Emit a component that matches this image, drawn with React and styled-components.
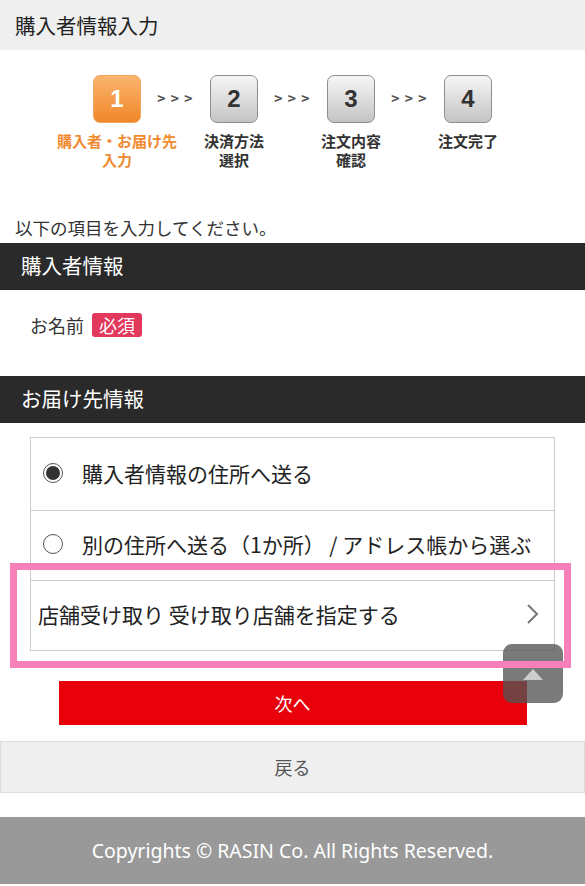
import styled, { createGlobalStyle } from "styled-components";

const Global = createGlobalStyle`
  body {
    margin: 0;
    background: #fff;
    font-family: "Noto Sans CJK JP", "Noto Sans", sans-serif;
    color: #333;
  }
`;

const Page = styled.div`
  position: relative;
  width: 585px;
  min-height: 886px;
  overflow: hidden;
`;

const TitleBar = styled.div`
  height: 50px;
  background: #efefef;
  display: flex;
  align-items: center;
  padding-left: 15px;
  font-size: 20.5px;
  color: #222;
`;

const Steps = styled.div`
  display: flex;
  justify-content: center;
  padding-top: 25px;
  height: 166px;
  box-sizing: border-box;
`;

const Step = styled.div`
  position: relative;
  width: 117px;
  display: flex;
  flex-direction: column;
  align-items: center;
  &:not(:last-child)::after {
    content: "> > >";
    position: absolute;
    top: 13px;
    right: -18px;
    font-size: 14px;
    font-weight: 700;
    color: #555;
    letter-spacing: 1px;
  }
`;

const StepBox = styled.div`
  width: 46px;
  height: 46px;
  border-radius: 7px;
  display: flex;
  align-items: center;
  justify-content: center;
  font-family: "Liberation Sans", Arial, sans-serif;
  font-weight: 700;
  font-size: 24px;
  border: 1px solid ${(p) => (p.$active ? "#f3a35c" : "#8e8e8e")};
  color: ${(p) => (p.$active ? "#fff" : "#333")};
  background: ${(p) =>
    p.$active
      ? "linear-gradient(#fbb46e, #f0872a)"
      : "linear-gradient(#f6f6f6, #c4c4c4)"};
`;

const StepLabel = styled.div`
  margin-top: 8px;
  font-size: 15px;
  font-weight: 700;
  line-height: 19px;
  text-align: center;
  white-space: nowrap;
  color: ${(p) => (p.$active ? "#f08a30" : "#333")};
`;

const Lead = styled.p`
  margin: 0 0 3px 15px;
  font-size: 17.5px;
  line-height: 24px;
  color: #333;
`;

const SectionHead = styled.div`
  height: 47px;
  background: #2a2a2a;
  color: #fff;
  font-size: 20.5px;
  display: flex;
  align-items: center;
  padding-left: 21px;
  padding-bottom: 3px;
  box-sizing: border-box;
`;

const FieldRow = styled.div`
  display: flex;
  gap: 8px;
  padding: 23px 0 0 30px;
  height: 86px;
  box-sizing: border-box;
  align-items: flex-start;
  font-size: 18px;
  line-height: 24px;
`;

const Badge = styled.span`
  background: #e2385c;
  color: #fff;
  border-radius: 3px;
  padding: 0 7px;
  line-height: 24px;
  font-size: 18px;
`;

const Options = styled.div`
  margin: 14px 30px 0;
  border: 1px solid #ccc;
`;

const Option = styled.div`
  height: ${(p) => (p.$first ? "72px" : "70px")};
  display: flex;
  align-items: center;
  gap: 19px;
  padding: 0 ${(p) => (p.$link ? "15px" : "0")} 0 ${(p) => (p.$link ? "7px" : "12px")};
  padding-bottom: 3px;
  box-sizing: border-box;
  font-size: 21px;
  color: #222;
  white-space: nowrap;
  & + & {
    border-top: 1px solid #ccc;
  }
`;

const Radio = styled.span`
  width: 18px;
  height: 18px;
  border-radius: 50%;
  border: 1.5px solid #555;
  display: flex;
  align-items: center;
  justify-content: center;
  flex-shrink: 0;
  &::after {
    content: "";
    display: ${(p) => (p.$checked ? "block" : "none")};
    width: 14px;
    height: 14px;
    border-radius: 50%;
    background: #333;
  }
`;

const Chevron = styled.svg`
  margin-left: auto;
  width: 13px;
  height: 22px;
`;

const Highlight = styled.div`
  position: absolute;
  left: 10px;
  top: 563px;
  width: 547px;
  height: 91px;
  border: 7px solid #f780b8;
  z-index: 3;
`;

const ToTop = styled.div`
  position: absolute;
  left: 503px;
  top: 644px;
  width: 60px;
  height: 59px;
  border-radius: 9px;
  background: rgba(85, 85, 85, 0.78);
  z-index: 2;
  display: flex;
  justify-content: center;
  padding-top: 25px;
  box-sizing: border-box;
  &::before {
    content: "";
    border-left: 10px solid transparent;
    border-right: 10px solid transparent;
    border-bottom: 11px solid #ccc;
    height: 0;
  }
`;

const Next = styled.button`
  display: block;
  margin: 30px auto 0;
  width: 468px;
  height: 44px;
  border: none;
  background: #e8000b;
  color: #fff;
  font-family: inherit;
  font-size: 18px;
`;

const Back = styled.button`
  display: block;
  margin-top: 16px;
  width: 585px;
  height: 52px;
  border: 1px solid #ddd;
  background: #efefef;
  color: #555;
  font-family: inherit;
  font-size: 18px;
`;

const Footer = styled.footer`
  margin-top: 24px;
  height: 67px;
  background: #999;
  color: #fff;
  display: flex;
  align-items: center;
  justify-content: center;
  font-family: "Noto Sans", sans-serif;
  font-size: 19.5px;
`;

const steps = [
  { n: 1, label: ["購入者・お届け先", "入力"], active: true },
  { n: 2, label: ["決済方法", "選択"] },
  { n: 3, label: ["注文内容", "確認"] },
  { n: 4, label: ["注文完了"] },
];

export default function App() {
  return (
    <Page>
      <Global />
      <TitleBar>購入者情報入力</TitleBar>
      <Steps>
        {steps.map((s) => (
          <Step key={s.n}>
            <StepBox $active={s.active}>{s.n}</StepBox>
            <StepLabel $active={s.active}>
              {s.label.map((l) => (
                <div key={l}>{l}</div>
              ))}
            </StepLabel>
          </Step>
        ))}
      </Steps>
      <Lead>以下の項目を入力してください。</Lead>
      <SectionHead>購入者情報</SectionHead>
      <FieldRow>
        お名前<Badge>必須</Badge>
      </FieldRow>
      <SectionHead>お届け先情報</SectionHead>
      <Options>
        <Option $first>
          <Radio $checked />
          購入者情報の住所へ送る
        </Option>
        <Option>
          <Radio />
          別の住所へ送る（1か所） / アドレス帳から選ぶ
        </Option>
        <Option $link>
          店舗受け取り 受け取り店舗を指定する
          <Chevron viewBox="0 0 13 22">
            <path d="M2 2 L11 11 L2 20" fill="none" stroke="#777" strokeWidth="2" />
          </Chevron>
        </Option>
      </Options>
      <Next>次へ</Next>
      <Back>戻る</Back>
      <Footer>Copyrights © RASIN Co. All Rights Reserved.</Footer>
      <Highlight />
      <ToTop />
    </Page>
  );
}
